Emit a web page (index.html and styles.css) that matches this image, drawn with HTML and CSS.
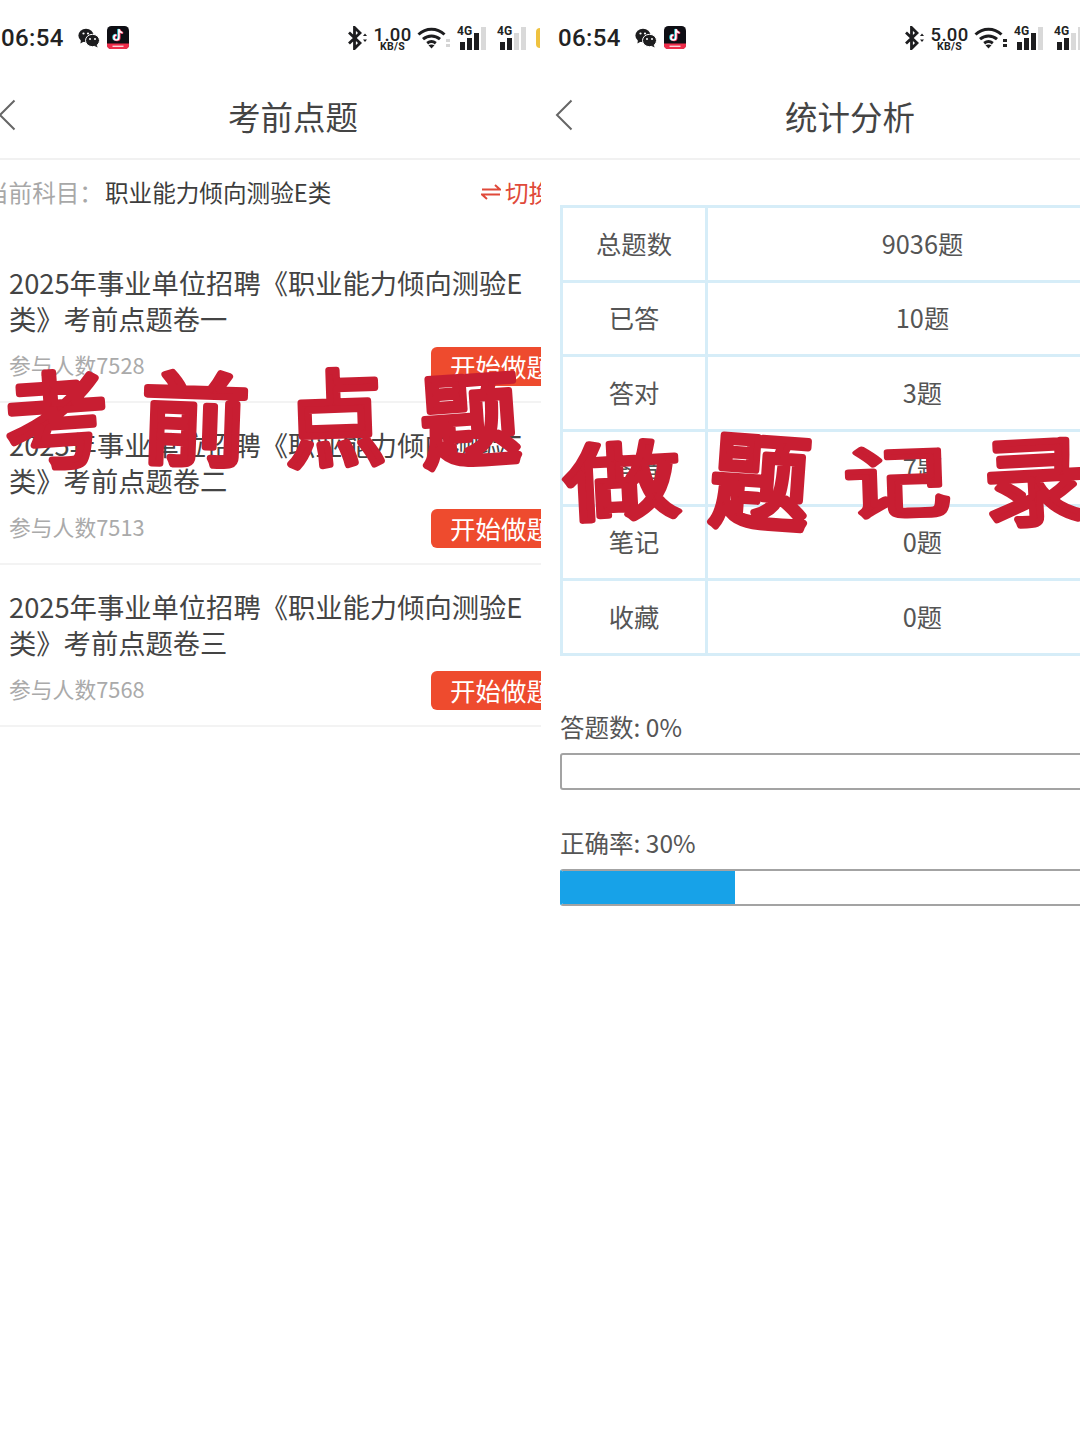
FILE: index.html
```html
<!DOCTYPE html>
<html lang="zh-CN">
<head>
<meta charset="utf-8">
<title>考前点题 / 统计分析</title>
<link rel="stylesheet" href="styles.css">
</head>
<body>
<svg class="defs" width="0" height="0" aria-hidden="true">
  <symbol id="wechat" viewBox="0 0 22 20">
    <ellipse cx="8" cy="7.5" rx="7.6" ry="6.8" fill="#1d1d1f"/>
    <path d="M3 12l-.6 3.6 4-2.4z" fill="#1d1d1f"/>
    <ellipse cx="14.5" cy="12.5" rx="7" ry="6.2" fill="#1d1d1f" stroke="#fff" stroke-width="1"/>
    <path d="M18.5 16.5l1.2 3-3.6-1.8z" fill="#1d1d1f"/>
    <circle cx="5.5" cy="5.5" r="1.1" fill="#fff"/><circle cx="10" cy="5.5" r="1.1" fill="#fff"/>
    <circle cx="12" cy="11" r="1" fill="#fff"/><circle cx="17" cy="11" r="1" fill="#fff"/>
  </symbol>
  <symbol id="tiktok" viewBox="0 0 22 23">
    <rect x="0" y="0" width="22" height="23" rx="4.5" fill="#0e0e14"/>
    <path d="M0 17.500h22V19a4 4 0 0 1-4 4H4a4 4 0 0 1-4-4z" fill="#ee2c4a"/>
    <rect x="5.500" y="19.600" width="11" height="1.400" fill="#fbd0d6"/>
    <path d="M11.900 3.200v8.300a2.500 2.500 0 1 1-2.500-2.500M11.900 3.200c.3 2 1.700 3.300 3.600 3.500" fill="none" stroke="#27d3e0" stroke-width="2" transform="translate(-.7 -.3)"/>
    <path d="M11.900 3.200v8.300a2.500 2.500 0 1 1-2.500-2.500M11.900 3.200c.3 2 1.700 3.300 3.600 3.500" fill="none" stroke="#f0345a" stroke-width="2" transform="translate(.7 .3)"/>
    <path d="M11.900 3.200v8.300a2.500 2.500 0 1 1-2.500-2.500M11.900 3.200c.3 2 1.700 3.300 3.600 3.500" fill="none" stroke="#fff" stroke-width="1.600"/>
  </symbol>
  <symbol id="bluetooth" viewBox="0 0 20 24">
    <path d="M1.500 6.500l11 10.500-5.500 5.500V1.500l5.500 5.500-11 10.500" fill="none" stroke="#1d1d1f" stroke-width="2.800"/>
    <path d="M15.500 10l2-2.500 2 2.500zM15.500 13.500l2 2.500 2-2.500z" fill="#1d1d1f"/>
  </symbol>
  <symbol id="wifi" viewBox="0 0 30 22">
    <path d="M1.500 7.500C9 .5 20 .5 27.500 7.500M6 12.200c5-4.400 12-4.400 17 0M10.200 16.200c2.800-2.200 5.800-2.200 8.600 0" fill="none" stroke="#1d1d1f" stroke-width="3"/>
    <path d="M14.500 21.500l-3-3.300c1.800-1.100 4.200-1.100 6 0z" fill="#1d1d1f"/>
  </symbol>
</svg>

<main class="screens">
  <section class="phone phone-left">
    <div class="phone-inner phone-inner-left">
      <div class="status">
        <span class="time">06:54</span>
        <svg class="ic-wechat"><use href="#wechat"/></svg>
        <svg class="ic-tiktok"><use href="#tiktok"/></svg>
        <div class="status-right">
          <svg class="ic-bt"><use href="#bluetooth"/></svg>
          <div class="speed"><b>1.00</b><small>KB/S</small></div>
          <span class="wifi-wrap wifi-faint"><svg class="ic-wifi"><use href="#wifi"/></svg><span class="wifi-arrows"></span></span>
          <div class="signal"><i class="g">4G</i><span class="bars"><u class="b1"></u><u class="b2"></u><u class="b3"></u><u class="b4 off"></u></span></div>
          <div class="signal"><i class="g">4G</i><span class="bars"><u class="b1"></u><u class="b2"></u><u class="b3 off"></u><u class="b4 off"></u></span></div>
          <span class="battery"></span>
        </div>
      </div>
      <header class="nav">
        <svg class="back" viewBox="0 0 18 32"><path d="M16.500 1.500L2 16l14.500 14.500" fill="none" stroke="#666" stroke-width="2"/></svg>
        <h1>考前点题</h1>
      </header>
      <div class="subject">
        <span class="subject-label">当前科目：</span><span class="subject-name">职业能力倾向测验E类</span>
        <span class="switch">
          <svg class="switch-ic" viewBox="0 0 20 16"><path d="M1 5.500h18l-5-4.500M19 10.500H1l5 4.500" fill="none" stroke="#e0493a" stroke-width="2"/></svg>切换科目
        </span>
      </div>
      <ul class="papers">
        <li class="paper">
          <p class="paper-title">2025年事业单位招聘《职业能力倾向测验E类》考前点题卷一</p>
          <div class="paper-meta"><span class="joined">参与人数7528</span><a class="start">开始做题</a></div>
        </li>
        <li class="paper">
          <p class="paper-title">2025年事业单位招聘《职业能力倾向测验E类》考前点题卷二</p>
          <div class="paper-meta"><span class="joined">参与人数7513</span><a class="start">开始做题</a></div>
        </li>
        <li class="paper">
          <p class="paper-title">2025年事业单位招聘《职业能力倾向测验E类》考前点题卷三</p>
          <div class="paper-meta"><span class="joined">参与人数7568</span><a class="start">开始做题</a></div>
        </li>
      </ul>
    </div>
  </section>

  <section class="phone phone-right">
    <div class="phone-inner phone-inner-right">
      <div class="status">
        <span class="time">06:54</span>
        <svg class="ic-wechat"><use href="#wechat"/></svg>
        <svg class="ic-tiktok"><use href="#tiktok"/></svg>
        <div class="status-right">
          <svg class="ic-bt"><use href="#bluetooth"/></svg>
          <div class="speed"><b>5.00</b><small>KB/S</small></div>
          <span class="wifi-wrap"><svg class="ic-wifi"><use href="#wifi"/></svg><span class="wifi-arrows"></span></span>
          <div class="signal"><i class="g">4G</i><span class="bars"><u class="b1"></u><u class="b2"></u><u class="b3"></u><u class="b4 off"></u></span></div>
          <div class="signal"><i class="g">4G</i><span class="bars"><u class="b1"></u><u class="b2"></u><u class="b3 off"></u><u class="b4 off"></u></span></div>
          <span class="battery"></span>
        </div>
      </div>
      <header class="nav">
        <svg class="back" viewBox="0 0 18 32"><path d="M16.500 1.500L2 16l14.500 14.500" fill="none" stroke="#666" stroke-width="2"/></svg>
        <h1>统计分析</h1>
      </header>
      <div class="stats">
        <table class="stat-table">
          <tr><th>总题数</th><td>9036题</td></tr>
          <tr><th>已答</th><td>10题</td></tr>
          <tr><th>答对</th><td>3题</td></tr>
          <tr><th>答错</th><td>7题</td></tr>
          <tr><th>笔记</th><td>0题</td></tr>
          <tr><th>收藏</th><td>0题</td></tr>
        </table>
        <div class="progress-block">
          <p class="progress-label">答题数: 0%</p>
          <div class="progress"></div>
        </div>
        <div class="progress-block">
          <p class="progress-label">正确率: 30%</p>
          <div class="progress"><div class="progress-fill" style="width:30.4%"></div></div>
        </div>
      </div>
    </div>
  </section>

  <svg class="stamps" viewBox="0 0 1080 1440" width="1080" height="1440">
    <text class="stamp" transform="translate(57 422) rotate(-4) scale(1.02 1.02)" y="37">考</text>
    <text class="stamp" transform="translate(195 421) rotate(2) scale(1.06 .98)" y="37">前</text>
    <text class="stamp" transform="translate(335 420) rotate(-2) scale(.98 1.02)" y="37">点</text>
    <text class="stamp" transform="translate(470 421) rotate(-4) scale(.98 1)" y="37">题</text>
    <text class="stamp" transform="translate(622 482) rotate(-3) scale(1.14 .82)" y="37">做</text>
    <text class="stamp" transform="translate(760 483) rotate(4) scale(.98 1.02)" y="37">题</text>
    <text class="stamp" transform="translate(897 483) rotate(-2) scale(1.04 .76)" y="37">记</text>
    <text class="stamp" transform="translate(1035 482) rotate(-3) scale(1 .94)" y="37">录</text>
  </svg>
</main>
</body>
</html>
```
FILE: styles.css
```css
* { box-sizing: border-box; }
html, body { margin: 0; padding: 0; background: #fff; }
body {
  width: 1080px;
  height: 1440px;
  overflow: hidden;
  font-family: "Noto Sans CJK SC", "Noto Sans", sans-serif;
  color: #444;
}
p, h1, ul { margin: 0; padding: 0; }
.defs { position: absolute; }

.screens { position: relative; display: flex; height: 1440px; overflow: hidden; }
.phone { overflow: hidden; height: 1440px; flex: none; }
.phone-left { width: 541px; }
.phone-right { width: 539px; }
.phone-inner { width: 590px; }
.phone-inner-left { margin-left: -2px; }
.phone-inner-right { margin-left: 14px; }
.phone-inner-right .nav { margin-left: -14px; width: 604px; padding-left: 14px; }
.phone-inner-right .back { left: 14px; }

/* status bar */
.status { display: flex; align-items: center; height: 76px; padding-left: 3px; }
.time { font-family: Roboto, sans-serif; font-weight: 500; font-size: 24px; letter-spacing: .4px; color: #222; width: 62px; flex: none; }
.ic-wechat { width: 22px; height: 20px; margin-left: 15px; flex: none; }
.ic-tiktok { width: 22px; height: 23px; margin-left: 7px; margin-top: -2px; flex: none; }
.status-right { display: flex; align-items: center; margin-left: auto; width: 241px; flex: none; }
.ic-bt { width: 21px; height: 24px; flex: none; }
.speed { display: flex; flex-direction: column; align-items: center; width: 35px; margin-left: 7px; padding-top: 4px; font-family: Roboto, sans-serif; color: #222; line-height: 1; flex: none; }
.speed b { font-size: 18.500px; font-weight: 500; letter-spacing: .3px; height: 14px; line-height: 14px; }
.speed small { font-size: 10.500px; font-weight: 700; letter-spacing: .3px; height: 10px; line-height: 10px; }
.wifi-wrap { position: relative; display: block; width: 30px; height: 22px; margin-left: 7px; flex: none; }
.ic-wifi { display: block; width: 30px; height: 22px; }
.wifi-arrows { position: absolute; right: -3px; bottom: 2px; width: 4px; height: 8px; background: repeating-linear-gradient(#222 0 3px, transparent 3px 5px); }
.wifi-faint .wifi-arrows { background: repeating-linear-gradient(#d5d5d5 0 3px, transparent 3px 5px); }
.signal { position: relative; width: 30px; height: 24px; margin-left: 10px; flex: none; }
.g { position: absolute; left: 0; top: -1px; z-index: 1; font-family: Roboto, sans-serif; font-style: normal; font-weight: 700; font-size: 12px; line-height: 12px; color: #222; }
.bars { position: absolute; inset: 0; display: block; }
.bars u { position: absolute; bottom: 0; width: 5px; background: #1d1d1f; text-decoration: none; }
.bars .b1 { left: 3px; height: 8px; }
.bars .b2 { left: 10px; height: 12px; }
.bars .b3 { left: 17px; height: 17px; }
.bars .b4 { left: 24px; height: 23px; }
.bars .off { background: #d9d9d9; }
.battery { width: 38px; height: 20px; margin-left: 9px; border-left: 4px solid #efc23f; border-radius: 4px; flex: none; }

/* nav */
.nav { position: relative; height: 84px; border-bottom: 2px solid #f1f1f1; display: flex; align-items: center; justify-content: center; }
.nav h1 { font-size: 32.500px; font-weight: 400; color: #444; line-height: 1; padding-bottom: 2px; }
.back { position: absolute; left: 0; top: 23px; width: 18px; height: 32px; }

/* subject */
.subject { display: flex; align-items: center; height: 81px; margin-left: -13px; padding-right: 19px; padding-bottom: 17px; font-size: 23.600px; }
.subject-label { color: #a8a8a8; width: 120px; flex: none; }
.subject-name { color: #3d3d3d; }
.switch { display: flex; align-items: center; margin-left: auto; color: #e0493a; white-space: nowrap; width: 88px; flex: none; }
.switch-ic { width: 20px; height: 16px; margin-right: 4px; flex: none; }

/* papers */
.papers { list-style: none; }
.paper { padding: 23px 19px 16px 11px; border-bottom: 2px solid #f3f3f3; height: 162px; }
.paper-title { font-size: 27.300px; line-height: 36px; width: 530px; color: #444; }
.paper-meta { display: flex; justify-content: space-between; align-items: center; margin-top: 11px; font-size: 21.800px; color: #aaa; }
.joined { margin-top: -4px; }
.start { display: block; width: 138px; height: 39px; padding-left: 19px; line-height: 38px; white-space: nowrap; font-size: 25.500px; color: #fff; background: #ee4b2e; border-radius: 6px; }

/* stats */
.stats { padding: 45px 5px 0; }
.stat-table { width: 580px; border-collapse: collapse; table-layout: fixed; font-size: 25.300px; color: #555; }
.stat-table tr { height: 74.670px; }
.stat-table th, .stat-table td { border: 3px solid #d6edf8; text-align: center; font-weight: 400; padding: 0 0 2px; }
.stat-table th { width: 145px; }
.progress-block { margin-top: 53px; }
.progress-block + .progress-block { margin-top: 35px; }
.progress-label { font-size: 24.500px; line-height: 36px; color: #555; margin-bottom: 8px; }
.progress { height: 37px; border: 2px solid #a3a3a3; border-radius: 3px; overflow: hidden; background: #fff; }
.progress-fill { margin: -2px 0 0 -2px; height: 37px; background: #17a2e8; }
.progress-block + .progress-block .progress { border-left-color: #17a2e8; }

/* overlaid handwriting */
.stamps { position: absolute; left: 0; top: 0; pointer-events: none; }
.stamp {
  font-family: "Noto Sans CJK SC", sans-serif;
  font-size: 102px;
  font-weight: 400;
  text-anchor: middle;
  fill: #c81e32;
  stroke: #c81e32;
  stroke-width: 7px;
  stroke-linejoin: round;
  stroke-linecap: round;
}
```
